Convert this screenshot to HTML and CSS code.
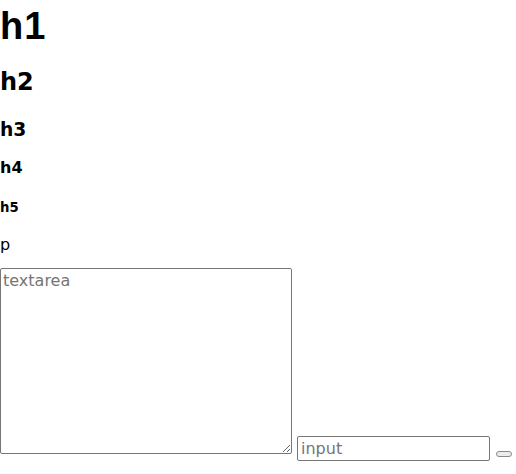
FILE: index.html
```html
<!DOCTYPE html>
<html>
<head>
<meta charset="utf-8">
<link rel="stylesheet" href="styles.css">
</head>
<body>
<h1 class="t-h1">h1</h1>
<h2 class="t-h2">h2</h2>
<h3 class="t-h3">h3</h3>
<h4 class="t-h4">h4</h4>
<h5 class="t-h5">h5</h5>
<p class="t-p">p</p>
<div class="controls">
  <textarea class="area" placeholder="textarea"></textarea>
  <input class="field" type="text" placeholder="input">
  <button class="btn" type="button"></button>
</div>
</body>
</html>
```
FILE: styles.css
```css
html, body {
  margin: 0;
  padding: 0;
  background: #fff;
}
body {
  font-family: "DejaVu Sans", sans-serif;
  color: #000;
}
.t-h1, .t-h2, .t-h3, .t-h4, .t-h5, .t-p {
  line-height: 1.15;
  font-weight: bold;
}
.t-h1 {
  font-family: "Liberation Sans", Arial, sans-serif;
  font-size: 38px;
  line-height: 37px;
  letter-spacing: 1px;
  margin: 8px 0 24px;
}
.t-h2 { font-size: 24px; margin: 0 0 22px; }
.t-h3 { font-size: 18.72px; margin: 0 0 19px; }
.t-h4 { font-size: 16px; margin: 0 0 22px; }
.t-h5 { font-size: 13.28px; margin: 0 0 21px; }
.t-p { font-size: 16px; font-weight: normal; margin: 0 0 14px; }
.controls {
  display: flex;
  align-items: flex-end;
}
.area {
  box-sizing: border-box;
  width: 292px;
  height: 186px;
  margin: 0 5px 7px 0;
  padding: 2px;
  border: 1px solid #767676;
  border-radius: 2px;
  font-family: "DejaVu Sans", sans-serif;
  font-size: 16px;
  resize: both;
}
.field {
  box-sizing: border-box;
  width: 193px;
  height: 25px;
  margin: 0 6px 0 0;
  padding: 1px 3px;
  border: 1px solid #767676;
  border-radius: 2px;
  font-family: "DejaVu Sans", sans-serif;
  font-size: 16px;
}
.area::placeholder, .field::placeholder { color: #757575; }
.btn {
  box-sizing: border-box;
  width: 16px;
  height: 6px;
  margin: 0 0 4px;
  padding: 0;
  border: 1px solid #8a8a8a;
  border-radius: 3px;
  background: #ececec;
}
```
